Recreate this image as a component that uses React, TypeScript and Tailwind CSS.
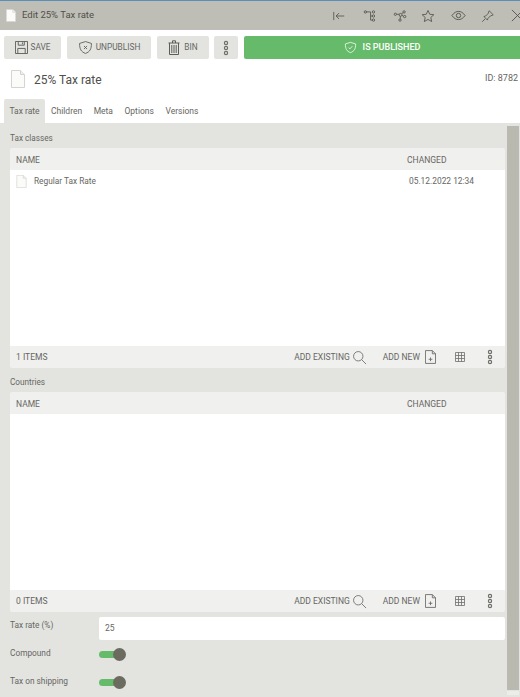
import type { ReactNode } from "react";

const Icon = ({ children, className = "" }: { children: ReactNode; className?: string }) => (
  <svg viewBox="0 0 24 24" fill="none" stroke="currentColor" strokeWidth="1.4" className={className}>
    {children}
  </svg>
);

const Dots = () => (
  <svg viewBox="0 0 6 18" fill="none" stroke="#6f6f6a" strokeWidth="1.2" className="w-[6px] h-[18px]">
    <circle cx="3" cy="4" r="1.6" />
    <circle cx="3" cy="9" r="1.6" />
    <circle cx="3" cy="14" r="1.6" />
  </svg>
);

const FileIcon = ({ className = "" }: { className?: string }) => (
  <svg viewBox="0 0 14 18" className={className}>
    <path d="M.5.5h9l4 4v13H.5z" fill="#fbfbfa" stroke="#d5d5d0" strokeWidth="1" />
    <path d="M9.5.5v4h4" fill="#f0f0ee" stroke="#d5d5d0" strokeWidth="1" />
  </svg>
);

const ToolButton = ({ icon, label, className = "" }: { icon: ReactNode; label: string; className?: string }) => (
  <div className={`h-[23px] bg-[#e3e4e0] rounded-[2px] flex items-center justify-center gap-[3px] text-[8.3px] text-[#666662] ${className}`}>
    {icon}
    <span>{label}</span>
  </div>
);

const Grid = ({ title, count, rows }: { title: string; count: string; rows?: ReactNode }) => (
  <div>
    <div className="h-[24px] flex items-center text-[8.2px] text-[#666662] pt-[4px]">{title}</div>
    <div className="h-[22px] bg-[#f0f0ee] flex items-center text-[8.5px] text-[#666662] rounded-t-[2px] pt-[2px]">
      <span className="pl-[6px] flex-1">NAME</span>
      <span className="w-[98px]">CHANGED</span>
    </div>
    <div className="h-[176px] bg-white">{rows}</div>
    <div className="h-[22px] bg-[#f0f0ee] flex items-center text-[8.5px] text-[#666662] rounded-b-[2px]">
      <span className="pl-[6px] flex-1">{count}</span>
      <span>ADD EXISTING</span>
      <Icon className="w-[15px] h-[15px] ml-[2px] text-[#6f6f6a]">
        <circle cx="10" cy="10" r="7.5" />
        <path d="M15.5 15.5l7 7" />
      </Icon>
      <span className="ml-[16px]">ADD NEW</span>
      <svg viewBox="0 0 12 15" fill="none" stroke="#6f6f6a" strokeWidth="1" className="w-[11px] h-[14px] ml-[5px]">
        <path d="M.5.5h7.5l3.5 3.500v10.500H.5z" />
        <path d="M8 .5v3.500h3.500M4 10h4M6 8v4" />
      </svg>
      <svg viewBox="0 0 10 10" fill="none" stroke="#6f6f6a" strokeWidth="0.8" className="w-[10px] h-[10px] ml-[19px]">
        <path d="M.5.5h9v9h-9zM.5 3.500h9M.5 6.500h9M3.500.5v9M6.500.5v9" />
      </svg>
      <div className="ml-[22px] mr-[12px] flex">
        <Dots />
      </div>
    </div>
  </div>
);

function Toggle() {
  return (
    <div className="relative w-[27px] h-[13px] flex items-center">
      <div className="w-[24px] h-[7px] bg-[#66bb6a] rounded-full" />
      <div className="absolute right-0 top-0 w-[13px] h-[13px] rounded-full bg-[#6b6b60]" />
    </div>
  );
}

export default function App() {
  return (
    <div className="w-[520px] h-[697px] overflow-hidden bg-white flex flex-col font-['Roboto',sans-serif]">
      <div className="h-[30px] shrink-0 bg-[#bfbeb6] border-t border-[#5b8fb9] flex items-center pl-[6px] text-[#4f4f4b]">
        <FileIcon className="w-[10px] h-[13px]" />
        <span className="ml-[6px] flex-1 text-[9.5px]">Edit 25% Tax rate</span>
        <div className="flex items-center gap-[15px] text-[#4f4f4b] -mr-[5px]">
          <Icon className="w-[14px] h-[14px]">
            <path d="M3 5v14M21 12H7M12 7l-5 5 5 5" />
          </Icon>
          <Icon className="w-[14px] h-[14px] ml-[2px]">
            <path d="M5 5h8M13 5v14h3M13 12h3" />
            <circle cx="4" cy="5" r="2" />
            <circle cx="18" cy="5" r="2" />
            <circle cx="18" cy="12" r="2" />
            <circle cx="18" cy="19" r="2" />
          </Icon>
          <Icon className="w-[14px] h-[14px] ml-[1px]">
            <circle cx="4" cy="9" r="2" />
            <circle cx="13" cy="10" r="2.500" />
            <circle cx="19" cy="5" r="2" />
            <circle cx="20" cy="13" r="2" />
            <circle cx="12" cy="19" r="2" />
            <path d="M6 9h4.500M15 8l2.500-2M15.500 11l2.500 1.500M12.500 12.500V17" />
          </Icon>
          <Icon className="w-[14px] h-[14px] -ml-[1px]">
            <path d="M12 2.500l3 6.500 7 .8-5.200 4.700 1.500 7L12 17.900 5.700 21.500l1.500-7L2 9.800 9 9z" />
          </Icon>
          <Icon className="w-[15px] h-[15px] ml-[1px]">
            <path d="M1.500 12C5 7 8.500 5.500 12 5.500S19 7 22.500 12C19 17 15.500 18.500 12 18.500S5 17 1.500 12z" />
            <circle cx="12" cy="12" r="3.500" />
          </Icon>
          <Icon className="w-[14px] h-[14px]">
            <path d="M14 3l7 7-5 2-4 4-1 3-6-6 3-1 4-4zM7 17l-5 5" />
          </Icon>
          <Icon className="w-[15px] h-[15px]">
            <path d="M3 3l18 18M21 3L3 21" />
          </Icon>
        </div>
      </div>

      <div className="flex pl-[4px] mt-[6px] shrink-0">
        <ToolButton
          className="w-[57px]"
          label="SAVE"
          icon={
            <svg viewBox="0 0 14 14" fill="none" stroke="#5c5c58" strokeWidth="1" className="w-[13px] h-[13px]">
              <path d="M.5.5h13v13H.5z" />
              <path d="M3.500.5v4h6.500v-4M3 13.500V8h8v5.500M8 1.500v2" />
            </svg>
          }
        />
        <ToolButton
          className="w-[84px] ml-[6px]"
          label="UNPUBLISH"
          icon={
            <Icon className="w-[15px] h-[15px] text-[#5c5c58]">
              <path d="M12 2.500l9.500 3c0 9-2.500 13.500-9.500 16-7-2.500-9.500-7-9.500-16z" />
              <path d="M9.500 9.500l5 5M14.500 9.500l-5 5" />
            </Icon>
          }
        />
        <ToolButton
          className="w-[52px] ml-[6px]"
          label="BIN"
          icon={
            <svg viewBox="0 0 12 15" fill="none" stroke="#5c5c58" strokeWidth="1" className="w-[12px] h-[15px] mr-[1px]">
              <path d="M.5 3h11M4.500 3V.8h3V3M1.500 3v11.500h9V3M3.800 5v8M6 5v8M8.200 5v8" />
            </svg>
          }
        />
        <div className="w-[24px] h-[23px] ml-[5px] bg-[#e3e4e0] rounded-[2px] flex items-center justify-center">
          <Dots />
        </div>
        <div className="flex-1 h-[23px] ml-[6px] bg-[#66bb6a] rounded-l-[2px] flex items-center justify-center gap-[6px] text-[9px] font-medium text-white">
          <Icon className="w-[13px] h-[13px]">
            <path d="M12 2.500l9.500 3c0 9-2.500 13.500-9.500 16-7-2.500-9.500-7-9.500-16z" />
            <path d="M8.500 12l2.500 2.500 4.500-5" />
          </Icon>
          <span>IS PUBLISHED</span>
        </div>
      </div>

      <div className="h-[22px] mt-[9px] shrink-0 flex items-center pl-[11px] pr-[2px]">
        <FileIcon className="w-[14px] h-[18px]" />
        <span className="ml-[9px] flex-1 text-[12px] text-[#4f4f4b] pt-[1px]">25% Tax rate</span>
        <span className="text-[9px] text-[#666662]">ID: 8782</span>
      </div>

      <div className="mt-[9px] h-[25px] shrink-0 flex pl-[4px] text-[8.5px] text-[#666662] border-b border-[#e3e4e0]">
        <div className="w-[41px] bg-[#e3e4e0] rounded-t-[2px] flex items-center justify-center">Tax rate</div>
        <div className="ml-[6px] flex items-center gap-[11.5px]">
          <span>Children</span>
          <span>Meta</span>
          <span>Options</span>
          <span>Versions</span>
        </div>
      </div>

      <div className="flex-1 min-h-0 bg-[#e3e4e0] flex pl-[10px]">
        <div className="flex-1 min-w-0">
          <Grid
            title="Tax classes"
            count="1 ITEMS"
            rows={
              <div className="flex items-center h-[22px] pl-[6px] text-[8.3px] text-[#666662]">
                <FileIcon className="w-[11px] h-[13px] mt-[1px]" />
                <span className="ml-[7px] flex-1">Regular Tax Rate</span>
                <span className="w-[96px] text-[8.4px]">05.12.2022 12:34</span>
              </div>
            }
          />
          <Grid title="Countries" count="0 ITEMS" />
          <div className="flex items-center mt-[5px] h-[23px] text-[8.3px] text-[#666662]">
            <span className="w-[89px] self-start pt-[2px]">Tax rate (%)</span>
            <div className="flex-1 h-[23px] bg-white rounded-[2px] flex items-center pl-[6px] text-[8.5px]">25</div>
          </div>
          <div className="flex items-center mt-[6px] h-[16px] text-[8.3px] text-[#666662]">
            <span className="w-[89px] -mt-[1px]">Compound</span>
            <Toggle />
          </div>
          <div className="flex items-center mt-[12px] h-[16px] text-[8.3px] text-[#666662]">
            <span className="w-[89px] -mt-[1px]">Tax on shipping</span>
            <Toggle />
          </div>
        </div>
        <div className="w-[15px] shrink-0 pl-[2px] pr-[1px] pt-[2px]">
          <div className="h-[564px] bg-[#b9b9b0]" />
          <div className="h-[4px] mt-[1px] bg-[#ecece8]" />
        </div>
      </div>
    </div>
  );
}
